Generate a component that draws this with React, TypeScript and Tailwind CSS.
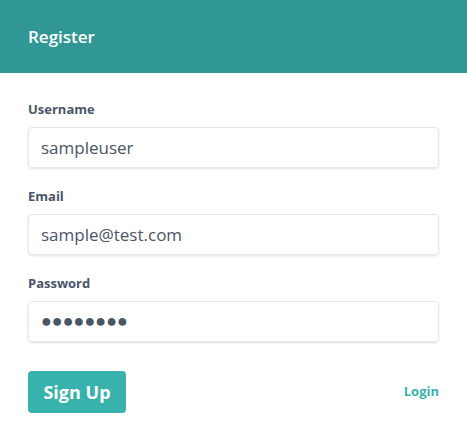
import React from 'react';

export default function App() {
  return (
    <div className="w-[467px] h-[440px] bg-white" style={{ fontFamily: '"Open Sans", "Noto Sans", sans-serif' }}>
      <div className="h-[73px] bg-[#319795] flex items-center px-7">
        <h1 className="text-[17px] font-semibold text-white">Register</h1>
      </div>
      <form className="px-7 pt-[26px]" onSubmit={(e) => e.preventDefault()}>
        <div className="mb-[18px]">
          <label className="block text-[13px] leading-5 font-bold text-[#4a5568] mb-2">Username</label>
          <input
            type="text"
            defaultValue="sampleuser"
            className="w-full h-[41px] px-3 rounded border border-[#e2e8f0] shadow text-[17px] text-[#4a5568] outline-none"
          />
        </div>
        <div className="mb-[18px]">
          <label className="block text-[13px] leading-5 font-bold text-[#4a5568] mb-2">Email</label>
          <input
            type="email"
            defaultValue="sample@test.com"
            className="w-full h-[41px] px-3 rounded border border-[#e2e8f0] shadow text-[17px] text-[#4a5568] outline-none"
          />
        </div>
        <div className="mb-[29px]">
          <label className="block text-[13px] leading-5 font-bold text-[#4a5568] mb-2">Password</label>
          {/* masked value drawn with large discs, like the native Windows bullet */}
          <input
            type="text"
            defaultValue="●●●●●●●●"
            className="w-full h-[41px] px-3 rounded border border-[#e2e8f0] shadow text-[18px] text-[#4a5568] outline-none font-['Liberation_Sans',sans-serif]"
          />
        </div>
        <div className="flex items-center justify-between">
          <button type="submit" className="w-[98px] h-[42px] flex items-center justify-center rounded bg-[#38b2ac] text-white text-[18px] font-bold">
            Sign Up
          </button>
          <a href="#" className="text-[13px] font-bold text-[#38b2ac]">Login</a>
        </div>
      </form>
    </div>
  );
}
